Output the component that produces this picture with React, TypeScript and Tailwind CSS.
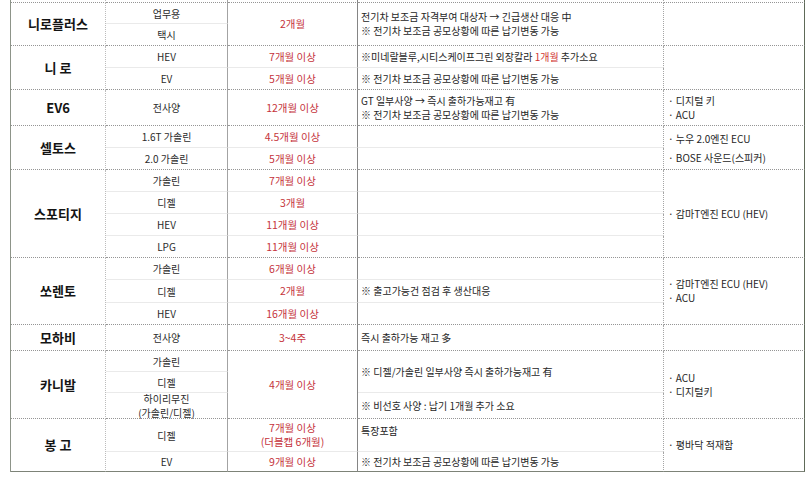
import React from 'react';

const GROUP = '[border-bottom:1px_dotted_#959595]';
const INNER = '[border-bottom:1px_solid_#eaeaea]';
const LAST = '[border-bottom:1px_solid_#7d8378]';

const c1 = 'items-center justify-center font-bold text-[13px] text-[#141414] [border-right:1px_dotted_#bcbcbc]';
const c2 = 'flex-col justify-center text-center text-[10px] leading-[13px] text-[#2b2b2b] [border-right:1px_solid_#a3a3a3]';
const c3 = 'flex-col justify-center text-center text-[10.5px] leading-[14px] text-[#c5333b] [border-right:1px_solid_#858585]';
const c4 = 'flex-col justify-center items-start pl-[3px] text-[10px] leading-[14px] text-[#262626] [border-right:1px_dotted_#a5a5a5]';
const c5 = 'flex-col justify-center items-start pl-[4px] text-[10px] leading-[14px] text-[#262626] [border-right:1px_solid_#5e6a58]';

const Cell = ({ className = '', children }: { className?: string; children?: React.ReactNode }) => (
  <div className={`flex min-w-0 whitespace-nowrap ${className}`}>{children}</div>
);

const EV_NOTE = '※ 전기차 보조금 공모상황에 따른 납기변동 가능';

export default function App() {
  return (
    <div className="w-[810px] h-[477px] bg-white overflow-hidden font-['Noto_Sans_CJK_KR','Liberation_Sans',sans-serif]">
      <div
        className="ml-[10px] w-[795px] grid grid-cols-[95px_122px_130px_306px_141px] [border-left:1px_solid_#8d9489]
        grid-rows-[3px_21px_22px_22px_22px_36px_22px_22px_22px_22px_22px_22px_22px_23px_22px_26px_21px_21px_26px_33px_20px]"
      >
        {/* cut-off row above */}
        <Cell className={`${c1} ${GROUP}`} />
        <Cell className={`${c2} ${GROUP}`} />
        <Cell className={`${c3} ${GROUP}`} />
        <Cell className={`${c4} ${GROUP}`} />
        <Cell className={`${c5} ${GROUP}`} />

        {/* 니로플러스 */}
        <Cell className={`${c1} ${GROUP} row-span-2`}>니로플러스</Cell>
        <Cell className={`${c2} ${INNER}`}>업무용</Cell>
        <Cell className={`${c3} ${GROUP} row-span-2`}>2개월</Cell>
        <Cell className={`${c4} ${GROUP} row-span-2 leading-[13px]`}>
          <span>전기차 보조금 자격부여 대상자 → 긴급생산 대응 中</span>
          <span>{EV_NOTE}</span>
        </Cell>
        <Cell className={`${c5} ${GROUP} row-span-2`} />
        <Cell className={`${c2} ${GROUP}`}>택시</Cell>

        {/* 니로 */}
        <Cell className={`${c1} ${GROUP} row-span-2`}>니 로</Cell>
        <Cell className={`${c2} ${INNER}`}>HEV</Cell>
        <Cell className={`${c3} ${INNER}`}>7개월 이상</Cell>
        <Cell className={`${c4} ${INNER}`}>
          <span>
            ※미네랄블루,시티스케이프그린 외장칼라 <span className="text-[#d0312f]">1개월</span> 추가소요
          </span>
        </Cell>
        <Cell className={`${c5} ${GROUP} row-span-2`} />
        <Cell className={`${c2} ${GROUP}`}>EV</Cell>
        <Cell className={`${c3} ${GROUP}`}>5개월 이상</Cell>
        <Cell className={`${c4} ${GROUP}`}>{EV_NOTE}</Cell>

        {/* EV6 */}
        <Cell className={`${c1} ${GROUP}`}>EV6</Cell>
        <Cell className={`${c2} ${GROUP}`}>전사양</Cell>
        <Cell className={`${c3} ${GROUP}`}>12개월 이상</Cell>
        <Cell className={`${c4} ${GROUP}`}>
          <span>GT 일부사양 → 즉시 출하가능재고 有</span>
          <span>{EV_NOTE}</span>
        </Cell>
        <Cell className={`${c5} ${GROUP}`}>
          <span>· 디지털 키</span>
          <span>· ACU</span>
        </Cell>

        {/* 셀토스 */}
        <Cell className={`${c1} ${GROUP} row-span-2`}>셀토스</Cell>
        <Cell className={`${c2} ${INNER}`}>1.6T 가솔린</Cell>
        <Cell className={`${c3} ${INNER}`}>4.5개월 이상</Cell>
        <Cell className={`${c4} ${INNER}`} />
        <Cell className={`${c5} ${GROUP} row-span-2 leading-[19px]`}>
          <span>· 누우 2.0엔진 ECU</span>
          <span>· BOSE 사운드(스피커)</span>
        </Cell>
        <Cell className={`${c2} ${GROUP}`}>2.0 가솔린</Cell>
        <Cell className={`${c3} ${GROUP}`}>5개월 이상</Cell>
        <Cell className={`${c4} ${GROUP}`} />

        {/* 스포티지 */}
        <Cell className={`${c1} ${GROUP} row-span-4`}>스포티지</Cell>
        <Cell className={`${c2} ${INNER}`}>가솔린</Cell>
        <Cell className={`${c3} ${INNER}`}>7개월 이상</Cell>
        <Cell className={`${c4} ${INNER}`} />
        <Cell className={`${c5} ${GROUP} row-span-4`}>
          <span>· 감마T엔진 ECU (HEV)</span>
        </Cell>
        <Cell className={`${c2} ${INNER}`}>디젤</Cell>
        <Cell className={`${c3} ${INNER}`}>3개월</Cell>
        <Cell className={`${c4} ${INNER}`} />
        <Cell className={`${c2} ${INNER}`}>HEV</Cell>
        <Cell className={`${c3} ${INNER}`}>11개월 이상</Cell>
        <Cell className={`${c4} ${INNER}`} />
        <Cell className={`${c2} ${GROUP}`}>LPG</Cell>
        <Cell className={`${c3} ${GROUP}`}>11개월 이상</Cell>
        <Cell className={`${c4} ${GROUP}`} />

        {/* 쏘렌토 */}
        <Cell className={`${c1} ${GROUP} row-span-3`}>쏘렌토</Cell>
        <Cell className={`${c2} ${INNER}`}>가솔린</Cell>
        <Cell className={`${c3} ${INNER}`}>6개월 이상</Cell>
        <Cell className={`${c4} ${INNER}`} />
        <Cell className={`${c5} ${GROUP} row-span-3`}>
          <span>· 감마T엔진 ECU (HEV)</span>
          <span>· ACU</span>
        </Cell>
        <Cell className={`${c2} ${INNER}`}>디젤</Cell>
        <Cell className={`${c3} ${INNER}`}>2개월</Cell>
        <Cell className={`${c4} ${INNER}`}>※ 출고가능건 점검 후 생산대응</Cell>
        <Cell className={`${c2} ${GROUP}`}>HEV</Cell>
        <Cell className={`${c3} ${GROUP}`}>16개월 이상</Cell>
        <Cell className={`${c4} ${GROUP}`} />

        {/* 모하비 */}
        <Cell className={`${c1} ${GROUP}`}>모하비</Cell>
        <Cell className={`${c2} ${GROUP}`}>전사양</Cell>
        <Cell className={`${c3} ${GROUP}`}>3~4주</Cell>
        <Cell className={`${c4} ${GROUP}`}>즉시 출하가능 재고 多</Cell>
        <Cell className={`${c5} ${GROUP}`} />

        {/* 카니발 */}
        <Cell className={`${c1} ${GROUP} row-span-3`}>카니발</Cell>
        <Cell className={`${c2} ${INNER}`}>가솔린</Cell>
        <Cell className={`${c3} ${GROUP} row-span-3`}>4개월 이상</Cell>
        <Cell className={`${c4} ${INNER} row-span-2`}>※ 디젤/가솔린 일부사양 즉시 출하가능재고 有</Cell>
        <Cell className={`${c5} ${GROUP} row-span-3`}>
          <span>· ACU</span>
          <span>· 디지털키</span>
        </Cell>
        <Cell className={`${c2} ${INNER}`}>디젤</Cell>
        <Cell className={`${c2} ${GROUP} leading-[14px]`}>
          <span>하이리무진</span>
          <span>(가솔린/디젤)</span>
        </Cell>
        <Cell className={`${c4} ${GROUP}`}>※ 비선호 사양 : 납기 1개월 추가 소요</Cell>

        {/* 봉고 */}
        <Cell className={`${c1} ${LAST} row-span-2`}>봉 고</Cell>
        <Cell className={`${c2} ${INNER}`}>디젤</Cell>
        <Cell className={`${c3} ${INNER}`}>
          <span>7개월 이상</span>
          <span>(더블캡 6개월)</span>
        </Cell>
        <Cell className={`${c4} ${INNER} pb-[9px]`}>특장포함</Cell>
        <Cell className={`${c5} ${LAST} row-span-2`}>
          <span>· 평바닥 적재함</span>
        </Cell>
        <Cell className={`${c2} ${LAST}`}>EV</Cell>
        <Cell className={`${c3} ${LAST}`}>9개월 이상</Cell>
        <Cell className={`${c4} ${LAST}`}>{EV_NOTE}</Cell>
      </div>
    </div>
  );
}
